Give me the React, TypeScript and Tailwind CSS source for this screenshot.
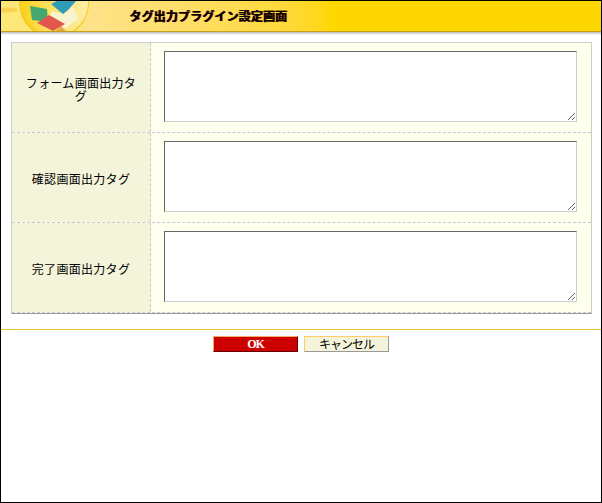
import React from 'react';

const rows = ['フォーム画面出力タグ', '確認画面出力タグ', '完了画面出力タグ'];

function HeaderArt() {
    return (
        <svg width="100" height="30" viewBox="0 1 100 30" className="shrink-0">
            <defs>
                <linearGradient id="disc" x1="0" y1="0" x2="1" y2="0">
                    <stop offset="0" stopColor="#fad21e" />
                    <stop offset="0.35" stopColor="#fcdf5a" />
                    <stop offset="1" stopColor="#fdeea6" />
                </linearGradient>
            </defs>
            <rect x="0" y="0" width="100" height="32" fill="#fde778" />
            <rect x="80" y="0" width="20" height="32" fill="#fee287" />
            <ellipse cx="6" cy="10" rx="11" ry="2.5" fill="#f6d24e" />
            <circle cx="53" cy="3" r="35" fill="#f8cc20" />
            <circle cx="54" cy="3" r="33" fill="url(#disc)" />
            <polygon points="51,11 63,14 72,6 77,19 63,29 49,16" fill="#f9f3d0" />
            <polygon points="50,4 58,0 76,0 67,10 62,14" fill="#2f9db5" />
            <polygon points="29,6 46,9 47,22 31,20" fill="#46a870" />
            <polygon points="36,23 48,15 64,24 52,31" fill="#e2574c" />
            <polygon points="53,32 60,26 66,32" fill="#e9a94a" />
        </svg>
    );
}

export default function App() {
    return (
        <div className="w-[602px] h-[503px] bg-white border border-black flex flex-col font-['Noto_Sans_CJK_JP','Liberation_Sans',sans-serif] text-black overflow-hidden">
            <div className="h-[31px] shrink-0 flex items-center bg-gradient-to-r from-[#fee287] from-[15%] to-[#ffd700] to-[55%] border-b border-[#c8a018] overflow-hidden">
                <HeaderArt />
                <h1 className="ml-7 text-[12px] font-bold leading-none whitespace-nowrap tracking-[0.15px] [text-shadow:1px_0_0_#600]">タグ出力プラグイン設定画面</h1>
            </div>
            <div className="h-[3px] shrink-0 bg-gradient-to-b from-[#bbbbbb] to-white" />

            <div className="mt-[7px] ml-[10px] w-[581px] shrink-0 flex flex-col border border-[#cccccc] border-b-[#999999]">
                {rows.map((label) => (
                    <div key={label} className="flex h-[90px] border-b border-dashed border-[#c8c8c8]">
                        <div className="w-[139px] shrink-0 bg-[#f4f4da] border-r border-dashed border-[#c8c8c8] flex items-center justify-center px-3 pt-[2px] text-center text-[12px] tracking-[0.3px] leading-[13px]">
                            {label}
                        </div>
                        <div className="flex-1 bg-[#ffffee] pl-[13px] pt-2">
                            <textarea className="block w-[413px] h-[71px] bg-white border border-[#666666] border-r-[#cccccc] border-b-[#cccccc] outline-none" />
                        </div>
                    </div>
                ))}
            </div>

            <div className="mt-[15px] shrink-0 border-t border-[#f0c828]" />

            <div className="mt-[6px] flex justify-center gap-[6px]">
                <button className="w-[85px] h-4 bg-[#cc0000] border border-[#f4b060] border-r-[#660000] border-b-[#660000] text-white text-[12px] font-bold font-['Liberation_Serif',serif] tracking-[-1px] leading-none">
                    OK
                </button>
                <button className="w-[85px] h-4 bg-[#f4f4da] border border-[#ffcc66] border-r-[#999999] border-b-[#999999] text-[12px] tracking-[-1px] leading-none">
                    キャンセル
                </button>
            </div>
        </div>
    );
}
